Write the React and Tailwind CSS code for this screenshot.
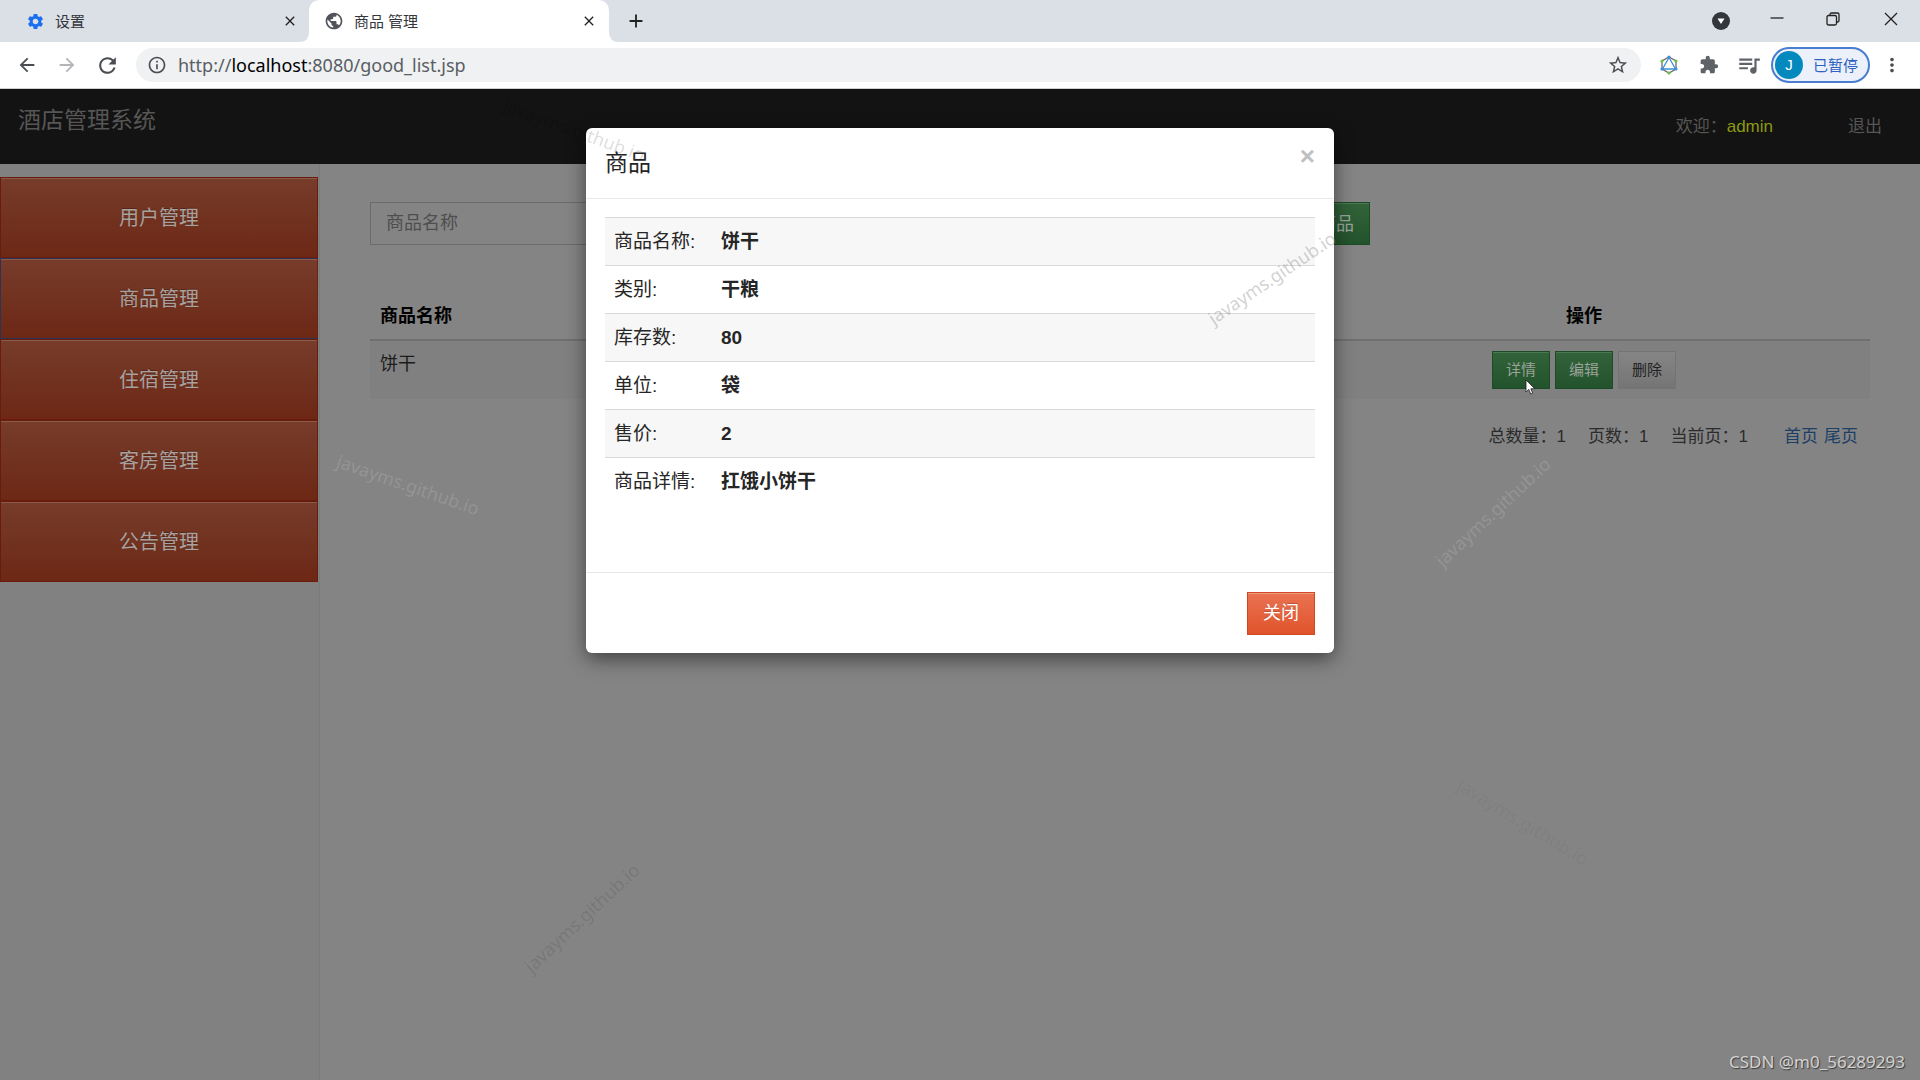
import React from "react";
import {
  MdSettings,
  MdPublic,
  MdClose,
  MdAdd,
  MdArrowBack,
  MdArrowForward,
  MdRefresh,
  MdInfoOutline,
  MdStarBorder,
  MdExtension,
  MdQueueMusic,
  MdMoreVert,
} from "react-icons/md";

const navItems = ["用户管理", "商品管理", "住宿管理", "客房管理", "公告管理"];

const details = [
  ["商品名称:", "饼干"],
  ["类别:", "干粮"],
  ["库存数:", "80"],
  ["单位:", "袋"],
  ["售价:", "2"],
  ["商品详情:", "扛饿小饼干"],
];

const marks = [
  "left-[574px] top-[130px] rotate-[20deg] text-black/15",
  "left-[408px] top-[485px] rotate-[19deg] text-white/15",
  "left-[1272px] top-[278px] rotate-[-34deg] text-[#8c8c8c]/40",
  "left-[1493px] top-[512px] rotate-[-43deg] text-white/15",
  "left-[582px] top-[918px] rotate-[-43deg] text-black/10",
  "left-[1523px] top-[822px] rotate-[31deg] text-black/5",
];

function TabStrip() {
  return (
    <div className="flex h-[42px] items-stretch bg-[#dbdfe6] text-[#33363a]">
      <div className="flex w-[309px] items-center pl-[26px] pr-[11px]">
        <MdSettings className="size-[19px] text-[#1a6ef0]" />
        <span className="ml-[10px] grow text-[15px]">设置</span>
        <button aria-label="关闭标签页" className="text-[#222]">
          <MdClose className="size-[16px]" />
        </button>
      </div>
      <div className="relative flex w-[300px] items-center rounded-t-[10px] bg-white pl-[15px] pr-[12px]">
        <svg viewBox="0 0 10 10" className="absolute bottom-0 right-full size-[10px]">
          <path d="M10 0v10H0Q10 10 10 0z" fill="#fff" />
        </svg>
        <svg viewBox="0 0 10 10" className="absolute bottom-0 left-full size-[10px]">
          <path d="M0 0v10h10Q0 10 0 0z" fill="#fff" />
        </svg>
        <MdPublic className="size-[20px] text-[#50545a]" />
        <span className="ml-[10px] grow text-[15px]">商品 管理</span>
        <button aria-label="关闭标签页" className="text-[#222]">
          <MdClose className="size-[16px]" />
        </button>
      </div>
      <button aria-label="新标签页" className="ml-[16px] text-[#222]">
        <MdAdd className="size-[22px]" />
      </button>
      <div className="ml-auto flex items-center">
        <button aria-label="搜索标签页" className="mr-[40px]">
          <svg viewBox="0 0 18 18" className="size-[18px]">
            <circle cx="9" cy="9" r="9" fill="#33363b" />
            <path d="M5.500 6.500h7L9 12z" fill="#fff" />
          </svg>
        </button>
        <button aria-label="最小化" className="mb-[6px] mr-[42px]">
          <svg viewBox="0 0 14 14" className="size-[14px]">
            <path d="M0.5 7h13" stroke="#222" strokeWidth="1.3" />
          </svg>
        </button>
        <button aria-label="还原" className="mb-[5px] mr-[44px]">
          <svg viewBox="0 0 14 14" className="size-[14px]" fill="none" stroke="#222" strokeWidth="1.3">
            <rect x="1" y="3.5" width="9.5" height="9.5" rx="1.5" />
            <path d="M4 3.5V2.4Q4 1 5.4 1H11.600Q13 1 13 2.400V8.600Q13 10 11.600 10H10.500" />
          </svg>
        </button>
        <button aria-label="关闭" className="mb-[5px] mr-[22px]">
          <svg viewBox="0 0 14 14" className="size-[14px]">
            <path d="M1 1l12 12M13 1L1 13" stroke="#222" strokeWidth="1.3" />
          </svg>
        </button>
      </div>
    </div>
  );
}

function HexIcon() {
  return (
    <svg viewBox="0 0 20 20" className="size-[20px]" fill="none">
      <path d="M10 2l7 4v8l-7 4-7-4V6z" stroke="#6b6b6b" strokeWidth="1.300" />
      <path d="M10 2.500L16.500 14h-13z" stroke="#3d8fd9" strokeWidth="1.300" />
      <circle cx="10" cy="2" r="1.600" fill="#3d8fd9" />
      <circle cx="17" cy="14" r="1.600" fill="#3d8fd9" />
      <circle cx="3" cy="14" r="1.600" fill="#3d8fd9" />
      <circle cx="10" cy="18" r="1.600" fill="#6fbf3f" />
      <circle cx="3" cy="6" r="1.600" fill="#6fbf3f" />
      <circle cx="17" cy="6" r="1.600" fill="#6fbf3f" />
    </svg>
  );
}

function AddressBar() {
  return (
    <div className="flex h-[47px] items-center border-b border-[#cfcfcf] bg-white pl-[16px] pr-[17px] text-[#4a4d51]">
      <button aria-label="后退">
        <MdArrowBack className="size-[22px]" />
      </button>
      <button aria-label="前进" className="ml-[18px] text-[#b3b5b8]">
        <MdArrowForward className="size-[22px]" />
      </button>
      <button aria-label="刷新" className="ml-[17px]">
        <MdRefresh className="size-[25px]" />
      </button>
      <div className="ml-[16px] flex h-[34px] grow items-center rounded-full bg-[#eff1f3] pl-[11px] pr-[12px]">
        <MdInfoOutline className="size-[20px]" />
        <span className="ml-[11px] grow text-[18px] text-[#5a5e63]">
          http://<span className="text-black">localhost</span>:8080/good_list.jsp
        </span>
        <button aria-label="收藏">
          <MdStarBorder className="size-[22px]" />
        </button>
      </div>
      <button aria-label="开发者扩展" className="ml-[18px]">
        <HexIcon />
      </button>
      <button aria-label="扩展程序" className="ml-[20px] text-[#5f6368]">
        <MdExtension className="size-[20px]" />
      </button>
      <button aria-label="媒体控制" className="ml-[17px] text-[#5f6368]">
        <MdQueueMusic className="size-[26px]" />
      </button>
      <button className="ml-[9px] flex h-[36px] w-[99px] items-center gap-[10px] rounded-full border-2 border-[#4a7dd0] bg-[#ebf0fb] pl-[2px] text-[15px] text-[#2d62c0]">
        <span className="flex size-[28px] items-center justify-center rounded-full bg-[#0389bd] font-['Liberation_Sans',sans-serif] text-[15px] text-white">
          J
        </span>
        已暂停
      </button>
      <button aria-label="菜单" className="ml-[11px]">
        <MdMoreVert className="size-[22px]" />
      </button>
    </div>
  );
}

function Header() {
  return (
    <header className="flex h-[75px] items-center bg-[#131313] pl-[18px] pr-[38px] text-[17px] text-[#565656]">
      <h1 className="mb-[12px] grow text-[23px]">酒店管理系统</h1>
      <p>
        欢迎：<span className="text-[#8c9a10]">admin</span>
      </p>
      <a href="#logout" className="ml-[75px]">
        退出
      </a>
    </header>
  );
}

function Sidebar() {
  return (
    <nav className="w-1/6 border-r border-[#7a7a7a] bg-[#818181] pr-px pt-[13px]">
      {navItems.map((item, i) => (
        <button
          key={item}
          className={
            "block h-[81px] w-full border bg-linear-to-b from-[#773c2a] to-[#6d2715] text-[20px] text-[#a8a19f] shadow-[inset_0_1px_0_#8a5b4c] [text-shadow:0_-1px_0_#00000040] " +
            (i === 1 ? "border-[#2c3358] border-r-[#6a2412]" : "border-[#6a1c0c]")
          }
        >
          {item}
        </button>
      ))}
    </nav>
  );
}

const smallGreen =
  "relative h-[38px] w-[58px] border border-[#1c4b26] bg-linear-to-b from-[#326339] to-[#23532c] text-[15px] text-[#9ba39c] shadow-[inset_0_1px_0_#4b7853]";

function Cursor() {
  return (
    <svg viewBox="0 0 11 16" className="absolute left-[32px] top-[27px] h-[16px] w-[11px]">
      <path
        d="M1 1v12l2.800-2.600L5.700 15l2-.9-1.900-4.300H9.800z"
        fill="#fff"
        stroke="#222"
        strokeWidth="0.8"
      />
    </svg>
  );
}

function GoodsList() {
  return (
    <main className="grow px-[50px] pt-[38px] text-[18px] leading-[26px] text-[#1c1c1c]">
      <form className="flex w-2/3 gap-[15px]">
        <input
          aria-label="商品名称"
          placeholder="商品名称"
          className="h-[43px] grow border border-[#6b6b6b] bg-transparent px-[15px] placeholder:text-[#4e4e4e]"
        />
        <button
          type="button"
          className="h-[43px] border border-[#1c4b26] bg-linear-to-b from-[#326339] to-[#23532c] px-[15px] text-[#9ba39c] shadow-[inset_0_1px_0_#4b7853]"
        >
          添加商品
        </button>
      </form>
      <table className="mt-[48px] w-full border-collapse">
        <thead>
          <tr className="border-b-2 border-[#6f6f6f] text-black">
            <th className="p-[10px] text-left">商品名称</th>
            <th className="w-[572px] p-[10px]">操作</th>
          </tr>
        </thead>
        <tbody>
          <tr className="bg-[#808080]">
            <td className="p-[10px] align-top">饼干</td>
            <td className="p-[10px]">
              <div className="flex justify-center gap-[5px]">
                <button className={smallGreen}>
                  详情
                  <Cursor />
                </button>
                <button className={smallGreen}>编辑</button>
                <button className="h-[38px] w-[58px] border border-[#747474] bg-linear-to-b from-[#858585] to-[#757575] text-[15px] text-[#222]">
                  删除
                </button>
              </div>
            </td>
          </tr>
        </tbody>
      </table>
      <div className="mt-[25px] flex justify-end pr-[12px] text-[17px] text-[#2b2b2b]">
        <span>总数量：1</span>
        <span className="ml-[22px]">页数：1</span>
        <span className="ml-[22px]">当前页：1</span>
        <a href="#first" className="ml-[36px] text-[#1c3f66]">
          首页
        </a>
        <a href="#last" className="ml-[6px] text-[#1c3f66]">
          尾页
        </a>
      </div>
    </main>
  );
}

function DetailDialog() {
  return (
    <section
      role="dialog"
      aria-label="商品"
      className="w-[748px] rounded-[6px] bg-white text-[#262626] shadow-[0_6px_19px_#00000080]"
    >
      <div className="flex h-[71px] items-center justify-between border-b border-[#e8e8e8] px-[19px]">
        <h2 className="text-[23px]">商品</h2>
        <button aria-label="关闭" className="mb-[14px] text-[26px] font-bold leading-none text-[#bfbfbf]">
          ×
        </button>
      </div>
      <div className="px-[19px] pb-[67px] pt-[18px]">
        <table className="w-full text-[19px] leading-[27px]">
          <tbody>
            {details.map(([label, value]) => (
              <tr key={label} className="border-t border-[#d9d9d9] odd:bg-[#f7f7f7]">
                <th scope="row" className="w-[106px] py-[10px] pl-[9px] text-left font-normal">
                  {label}
                </th>
                <td className="px-[10px] py-[10px] font-bold">{value}</td>
              </tr>
            ))}
          </tbody>
        </table>
      </div>
      <div className="flex justify-end border-t border-[#e8e8e8] px-[19px] pb-[18px] pt-[19px]">
        <button className="h-[43px] w-[68px] border border-[#cf4a22] bg-linear-to-b from-[#ea7250] to-[#e0532a] text-[18px] text-white shadow-[inset_0_1px_0_#f09a80] [text-shadow:0_-1px_0_#00000033]">
          关闭
        </button>
      </div>
    </section>
  );
}

export default function App() {
  return (
    <div className="relative flex min-h-screen flex-col overflow-hidden bg-[#848484] font-['Liberation_Sans','Noto_Sans_CJK_SC',sans-serif]">
      <div className="font-['Noto_Sans','Noto_Sans_CJK_SC',sans-serif]">
        <TabStrip />
        <AddressBar />
      </div>
      <div className="relative flex grow flex-col">
        <Header />
        <div className="flex grow">
          <Sidebar />
          <GoodsList />
        </div>
        <div className="pointer-events-none absolute inset-0 flex items-start justify-center pt-[39px]">
          <DetailDialog />
        </div>
      </div>
      <div className="pointer-events-none absolute inset-0 font-['Noto_Sans',sans-serif]">
        {marks.map((cls) => (
          <span key={cls} className={"absolute -translate-x-1/2 -translate-y-1/2 text-[18px] " + cls}>
            javayms.github.io
          </span>
        ))}
        <span className="absolute bottom-[6px] right-[15px] text-[17px] text-[#d2d2d2] [text-shadow:1px_1px_1px_#3a3a3a]">
          CSDN @m0_56289293
        </span>
      </div>
    </div>
  );
}
